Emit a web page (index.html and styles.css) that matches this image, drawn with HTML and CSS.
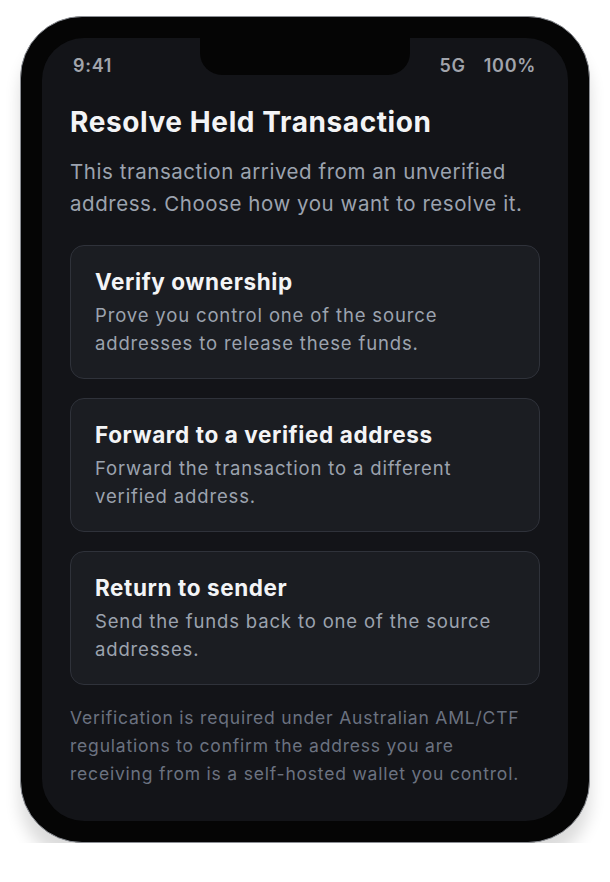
FILE: index.html
```html
<!DOCTYPE html>
<html>

<head>
    <link rel="stylesheet" href="styles.css">
</head>

<body>

    <div class="phone">
        <div class="screen">
            <div class="notch"></div>

            <div class="status-bar">
                <span>9:41</span>
                <span class="status-right">
                    <span>5G</span>
                    <span>100%</span>
                </span>
            </div>

            <div class="content">
                <h1 class="title">Resolve Held Transaction</h1>
                <p class="intro">This transaction arrived from an unverified address. Choose how you want to resolve it.</p>

                <!-- Resolution options -->
                <div class="options">
                    <div class="option">
                        <h2>Verify ownership</h2>
                        <p>Prove you control one of the source addresses to release these funds.</p>
                    </div>
                    <div class="option">
                        <h2>Forward to a verified address</h2>
                        <p>Forward the transaction to a different verified address.</p>
                    </div>
                    <div class="option">
                        <h2>Return to sender</h2>
                        <p>Send the funds back to one of the source addresses.</p>
                    </div>
                </div>

                <p class="note">Verification is required under Australian AML/CTF regulations to confirm the address you are receiving from is a self-hosted wallet you control.</p>
            </div>
        </div>
    </div>

</body>

</html>
```

FILE: styles.css
```css
body {
    margin: 0;
    background-color: white;
    font-family: Inter, "Noto Sans", sans-serif;
}

/* Device frame */
.phone {
    width: 570px;
    height: 827px;
    margin: 16px 0 0 20px;
    box-sizing: border-box;
    padding: 21px;
    background-color: #050505;
    border: 1px solid #8b8e94;
    border-radius: 62px;
    box-shadow: 0 18px 16px rgba(0, 0, 0, 0.14);
}

.screen {
    position: relative;
    height: 100%;
    background-color: #131418;
    border-radius: 42px;
    display: flex;
    flex-direction: column;
}

.notch {
    position: absolute;
    top: 0;
    left: 158px;
    width: 210px;
    height: 37px;
    background-color: #050505;
    border-radius: 0 0 22px 22px;
}

.status-bar {
    display: flex;
    justify-content: space-between;
    padding: 17px 32px 0 31px;
    height: 21px;
    font-size: 18px;
    font-weight: 600;
    letter-spacing: 0.7px;
    line-height: 21px;
    color: #a1a4ab;
}

.status-right {
    display: flex;
    gap: 18px;
}

.content {
    padding: 29px 28px 0 28px;
}

.title {
    margin: 0;
    font-size: 28px;
    line-height: 34px;
    font-weight: 700;
    letter-spacing: 0.6px;
    color: #f3f4f6;
}

.intro {
    margin: 17px 0 0 0;
    font-size: 20.5px;
    line-height: 32px;
    letter-spacing: 0.55px;
    color: #9ca3af;
}

.options {
    display: flex;
    flex-direction: column;
    gap: 19px;
    margin-top: 25px;
}

.option {
    background-color: #1b1d22;
    border: 1px solid #2f323a;
    border-radius: 14px;
    padding: 21px 24px;
}

.option h2 {
    margin: 0;
    font-size: 22.5px;
    line-height: 30px;
    font-weight: 700;
    letter-spacing: 0.6px;
    color: #f3f4f6;
}

.option p {
    margin: 4px 0 0 0;
    font-size: 18.5px;
    line-height: 28px;
    letter-spacing: 0.85px;
    color: #9ca3af;
}

.note {
    margin: 19px 0 0 0;
    font-size: 17.5px;
    line-height: 28px;
    letter-spacing: 0.8px;
    color: #6b7280;
}
```
